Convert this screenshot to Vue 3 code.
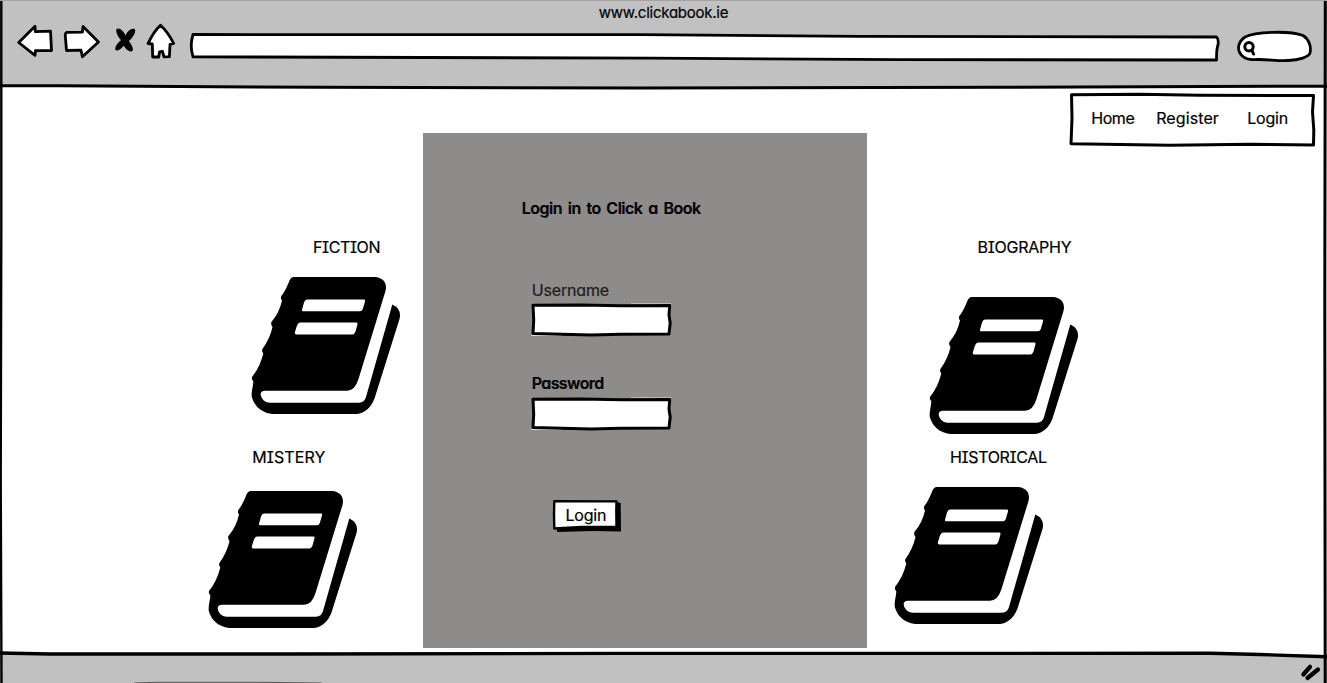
<script setup>
const leftBooks = [
  { name: 'FICTION', key: 'fiction' },
  { name: 'MISTERY', key: 'mistery' },
]
const rightBooks = [
  { name: 'BIOGRAPHY', key: 'biography' },
  { name: 'HISTORICAL', key: 'historical' },
]
const cover =
  'M43 1H125C133 1.500 137.500 7 135.500 15L108.500 103Q105 114.500 97 114.700H15Q10.500 115 10.700 118.500C11.500 123 14.500 126.500 20 126.700H109Q114.500 126.500 116 121L142.300 28.500Q152 33 149.500 43L124.500 122.500Q119 136.500 107 138H22Q6 135.500 1.800 121C1 115 3.800 108 3.200 105Q1 103 2.300 100.500Q10 91 13.300 77.500Q11.500 75.500 12.400 73Q20 62.500 22.500 51Q20.500 48.500 21.400 46Q29.500 36.500 32 24.500Q30.300 22.500 31.300 20Q35 15.500 38.500 7Q40 2 43 1Z'
const labels =
  'M57 23.600H114Q115.500 23.800 115 25.500L112.800 33Q112 35.300 110 35.300H53Q51.700 35.200 52 33.700L54 26.500Q55 23.800 57 23.600ZM50 46.600H106.500Q107.800 46.800 107.500 48.200L105.500 55.500Q104.500 58.300 102.500 58.400H46Q44.500 58.200 44.800 56.600L46.800 50Q47.800 46.900 50 46.600Z'
</script>

<template>
  <div class="window">
    <header class="chrome">
      <div class="title">www.clickabook.ie</div>
      <div class="toolbar">
        <svg class="tools" width="160" height="44" viewBox="16 22 160 44">
          <g class="outline">
            <path d="M18.700 42.500L35 26.300L35.300 31.600L50.500 31.200L51.500 50.500L35.500 50.700L35 55.300Z" />
            <path d="M98.500 42L83 26.500L82.400 32.200L67 32.300Q65 33 65.300 36L66.500 50.500L81 50.200L82.400 56.800Z" />
            <path d="M160.500 25.200Q154 31 148 43.500L152.300 44L152.700 57L158.700 57L159.500 52L162.500 51.500L164 56.800L169.400 56.700L170 44.300L173.700 43.500Q168 32 160.500 25.200Z" />
          </g>
          <path class="cross" d="M116.500 29C119 27 123.500 30.500 125.500 35.500C127.500 31 131.500 27.500 135 29.200C136 32.500 133 37.500 128.800 41C131.500 44.500 134 48.500 132.500 51C129.500 52.500 126 49.500 123.700 45.700C121 49 118 51 115.500 50.300C114.500 47 117.500 43 121 40.300C118 36.500 115.500 32.500 116.500 29Z" />
        </svg>
        <svg class="address" width="1034" height="32" viewBox="188 32 1034 32">
          <path class="outline" d="M193 34.500Q189.500 46 193 56.800L650 58.200L900 59.600L1216.500 60Q1216.500 48 1218 45Q1219 39 1216.500 37L860 36.300L640 34.700Z" />
        </svg>
        <svg class="search" width="80" height="34" viewBox="1235 30 80 34">
          <path class="outline" d="M1245 37C1255 31.500 1290 30.500 1303 35.500C1309 39 1311.500 47 1310 53C1309 57 1299 60 1288 60.500C1277 61.500 1266 58.600 1253 59.700C1244 59.500 1238.500 54 1238.500 47.500Q1239 41 1245 37Z" />
          <circle class="lens" cx="1249" cy="46.800" r="4.200" />
          <path class="lens" d="M1251.800 50L1253.500 54" />
        </svg>
      </div>
      <svg class="rule" width="1327" height="6" viewBox="0 84 1327 6">
        <path d="M0 85.700H60L320 87.300L640 88L1000 87.200L1327 86.200" />
      </svg>
    </header>

    <main class="page">
      <section class="shelf">
        <figure v-for="book in leftBooks" :key="book.key" :class="['book', book.key]">
          <figcaption>{{ book.name }}</figcaption>
          <svg width="152" height="140" viewBox="0 0 152 140">
            <path :d="cover" />
            <path class="paper" :d="labels" />
          </svg>
        </figure>
      </section>

      <form class="panel" @submit.prevent>
        <h1>Login in to Click a Book</h1>
        <label class="field username">
          <span>Username</span>
          <span class="box">
            <svg width="141" height="34" viewBox="0 0 141 34">
              <path class="corner" d="M0.500 33V31H30V33ZM100 1V0.500H140V3Z" />
              <path class="edge" d="M2 2.300L50 2L90 2.800L138.700 2.500L138 12L139.200 20L138 31L90 31.300L60 32L2 30.600L2.700 17Z" />
            </svg>
            <input type="text" aria-label="Username" />
          </span>
        </label>
        <label class="field password">
          <span>Password</span>
          <span class="box">
            <svg width="141" height="34" viewBox="0 0 141 34">
              <path class="corner" d="M0.500 33V31H30V33ZM100 1V0.500H140V3Z" />
              <path class="edge" d="M2 2.300L50 2L90 2.800L138.700 2.500L138 12L139.200 20L138 31L90 31.300L60 32L2 30.600L2.700 17Z" />
            </svg>
            <input type="password" aria-label="Password" />
          </span>
        </label>
        <button class="submit" type="submit">
          <svg width="70" height="34" viewBox="0 0 70 34">
            <path d="M5 7L66 3.500L68.700 4L69 32.500L40 32L5 33Z" />
            <path class="edge" d="M2.300 2.300L64.500 2.400L64.300 12L64.500 28L30 28L2.300 29.500L2 15Z" />
          </svg>
          <span>Login</span>
        </button>
      </form>

      <section class="shelf right">
        <nav class="menu">
          <svg width="248" height="56" viewBox="1068 92 248 56">
            <path class="edge" d="M1071.500 94.700L1140 94.300L1200 95.300L1313.500 95.500L1312.500 112L1313.800 130L1313.500 145L1250 144.300L1170 145.300L1071 143.800L1072 118Z" />
          </svg>
          <a class="home">Home</a>
          <a class="register">Register</a>
          <a class="login">Login</a>
        </nav>
        <figure v-for="book in rightBooks" :key="book.key" :class="['book', book.key]">
          <figcaption>{{ book.name }}</figcaption>
          <svg width="152" height="140" viewBox="0 0 152 140">
            <path :d="cover" />
            <path class="paper" :d="labels" />
          </svg>
        </figure>
      </section>
    </main>

    <footer class="status">
      <svg width="1327" height="33" viewBox="0 650 1327 33">
        <path class="fill" d="M0 653.500L1200 653.500L1327 656.500V683H0Z" />
        <path class="line" d="M0 653L50 654L290 654L620 653.400L1210 653.300L1260 654.500L1327 656.800" />
        <path class="grip" d="M1303.300 674.500L1310 666.800" />
        <path class="grip" d="M1307.500 678L1318 669.500" />
        <path class="thumb" d="M134 683L156 682.300H262L322 683" />
      </svg>
    </footer>
    <svg class="frame" width="1327" height="683" viewBox="0 0 1327 683">
      <path d="M1.300 0L1.300 230L0.700 480L1.500 683" />
      <path class="side" d="M1325.300 0L1324.800 300L1325.200 683" />
      <path class="top" d="M0 0.500H1327" />
    </svg>
  </div>
</template>

<style>
body {
  margin: 0;
  overflow: hidden;
}
</style>

<style scoped>
.window {
  position: relative;
  display: flex;
  flex-direction: column;
  width: 1327px;
  height: 683px;
  overflow: hidden;
  background: #fff;
  color: #000;
  font: 16px/20px Inter, sans-serif;
  font-feature-settings: "cv11", "cv08";
  -webkit-text-stroke: 0.2px currentColor;
}
svg {
  display: block;
}
.frame {
  position: absolute;
  inset: 0;
  pointer-events: none;
  fill: none;
  stroke: #000;
  stroke-width: 2.4;
}
.frame .side {
  stroke-width: 3;
}
.frame .top {
  stroke: #a3a3a3;
  stroke-width: 1;
}
.chrome {
  height: 90px;
  display: flex;
  flex-direction: column;
  background: linear-gradient(#c1c1c1 87px, #fff 87px);
}
.title {
  height: 20px;
  padding-top: 3px;
  box-sizing: border-box;
  text-align: center;
  font-size: 15px;
  letter-spacing: -0.25px;
}
.toolbar {
  flex: 1;
  display: flex;
  align-items: flex-start;
  padding: 2px 12px 0 16px;
}
.tools {
  margin-right: 12px;
}
.address {
  margin-top: 10px;
  margin-right: 13px;
}
.search {
  margin-top: 8px;
}
.outline {
  fill: #fff;
  stroke: #000;
  stroke-width: 2.8;
  stroke-linejoin: round;
}
.cross {
  fill: #000;
}
.lens {
  fill: none;
  stroke: #000;
  stroke-width: 3;
  stroke-linecap: round;
}
.rule {
  fill: none;
  stroke: #000;
  stroke-width: 3;
}
.page {
  height: 560px;
  display: grid;
  grid-template-columns: 423px 444px 1fr;
}
.book {
  margin: 0;
}
.book svg {
  fill: #000;
}
.book .paper {
  fill: #fff;
}
.fiction {
  padding: 147px 0 0 249.500px;
}
.fiction figcaption {
  padding-left: 63.500px;
  margin-bottom: 19px;
  letter-spacing: -0.4px;
}
.mistery {
  padding: 31px 0 0 206.800px;
}
.mistery figcaption {
  padding-left: 45.500px;
  margin-bottom: 22.700px;
  letter-spacing: 0.1px;
}
.biography {
  padding: 89px 0 0 61px;
}
.biography figcaption {
  padding-left: 49.500px;
  margin-bottom: 39px;
  letter-spacing: -0.25px;
}
.historical {
  padding: 11px 0 0 26px;
}
.historical figcaption {
  padding-left: 57px;
  margin-bottom: 19px;
  letter-spacing: -0.35px;
}
.panel {
  box-sizing: border-box;
  height: 515px;
  margin-top: 43px;
  padding: 65px 0 0 98px;
  background: #8d8c8a;
}
h1 {
  margin: 0 0 61px;
  padding-left: 0.700px;
  font-size: 16px;
  line-height: 20px;
  font-weight: 600;
  letter-spacing: -0.5px;
  word-spacing: 2.200px;
}
.field {
  display: block;
  padding-left: 10px;
}
.field > span:first-child {
  display: block;
  padding-left: 0.700px;
  margin-bottom: 4px;
}
.username {
  color: #1c1c1c;
  letter-spacing: -0.150px;
  margin-bottom: 36px;
}
.username > span:first-child {
  padding-top: 1px;
  margin-bottom: 3px;
}
.password {
  font-weight: 600;
  letter-spacing: -0.600px;
  margin-bottom: 68px;
}
.box {
  position: relative;
  display: block;
  width: 141px;
  height: 34px;
}
.box input {
  position: absolute;
  inset: 5px;
  width: 131px;
  box-sizing: border-box;
  border: 0;
  outline: 0;
  background: transparent;
}
.edge {
  fill: #fff;
  stroke: #000;
  stroke-width: 3;
  stroke-linejoin: round;
}
.corner {
  fill: #e4e4e4;
}
.submit {
  position: relative;
  display: block;
  width: 70px;
  height: 34px;
  margin-left: 31px;
  padding: 0 0 2px 13.500px;
  border: 0;
  background: none;
  color: #000;
  font: inherit;
  font-feature-settings: inherit;
  letter-spacing: -0.200px;
  text-align: left;
}
.submit svg {
  position: absolute;
  inset: 0;
}
.submit .edge {
  stroke-width: 2.4;
}
.submit span {
  position: relative;
}
.menu {
  position: relative;
  display: flex;
  box-sizing: border-box;
  width: 248px;
  height: 56px;
  margin: 2px 0 0 201px;
  padding: 16px 0 0 23.200px;
}
.menu svg {
  position: absolute;
  inset: 0;
}
.menu a {
  position: relative;
}
.home {
  width: 65px;
  letter-spacing: -0.4px;
}
.register {
  width: 91px;
  letter-spacing: 0.1px;
}
.login {
  letter-spacing: -0.200px;
}
.status {
  height: 33px;
}
.fill {
  fill: #c1c1c1;
}
.line {
  fill: none;
  stroke: #000;
  stroke-width: 3.4;
}
.grip {
  fill: none;
  stroke: #000;
  stroke-width: 4.2;
  stroke-linecap: round;
}
.thumb {
  fill: none;
  stroke: #555;
  stroke-width: 1;
}
</style>
